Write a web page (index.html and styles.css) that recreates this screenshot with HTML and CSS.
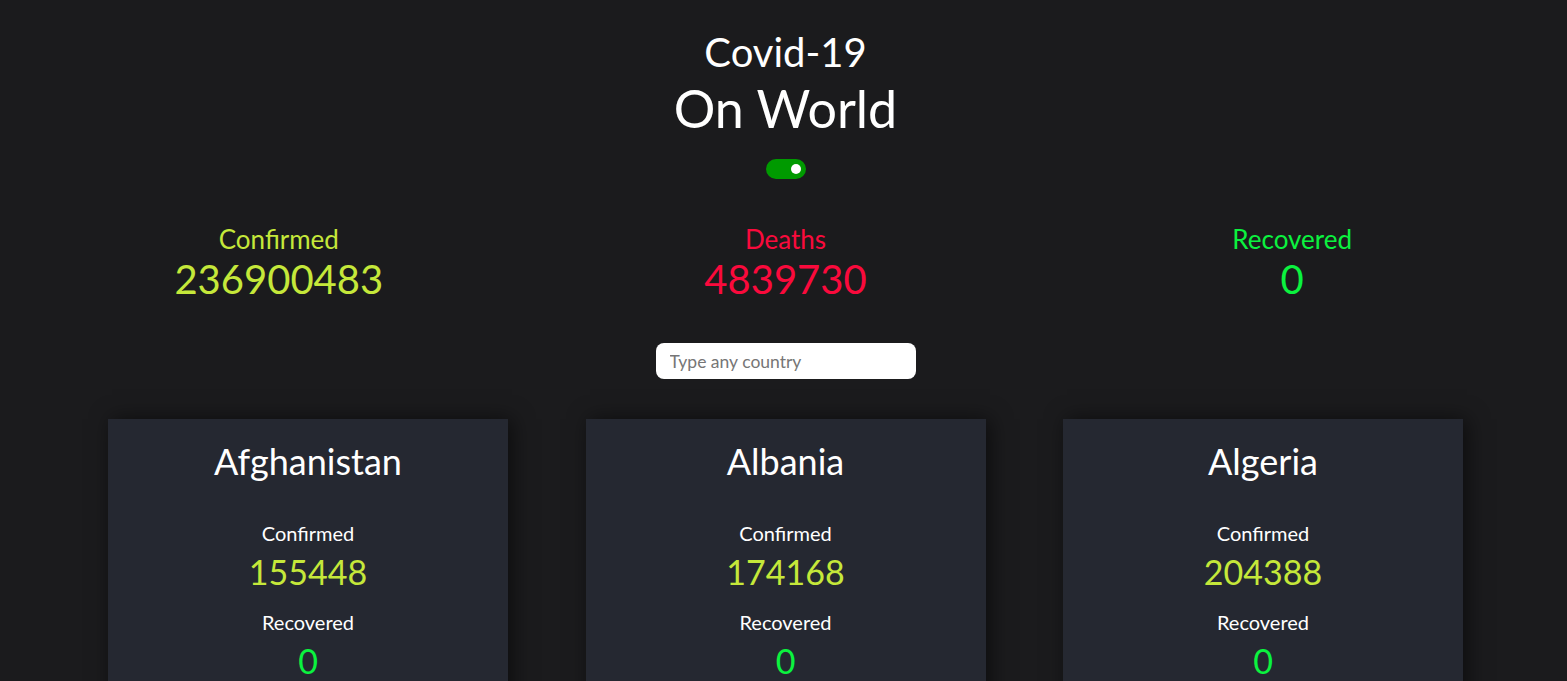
FILE: index.html
```html
<!DOCTYPE html>
<html lang="en">
<head>
<meta charset="utf-8">
<title>Covid-19 On World</title>
<link rel="stylesheet" href="styles.css">
</head>
<body>
<header class="hero">
  <h2 class="sub">Covid-19</h2>
  <h1 class="title">On World</h1>
  <label class="switch"><span class="knob"></span></label>
</header>
<section class="stats">
  <div class="stat confirmed"><div class="label">Confirmed</div><div class="num">236900483</div></div>
  <div class="stat deaths"><div class="label">Deaths</div><div class="num">4839730</div></div>
  <div class="stat recovered"><div class="label">Recovered</div><div class="num">0</div></div>
</section>
<div class="search"><input type="text" placeholder="Type any country"></div>
<section class="cards">
  <div class="card">
    <h3 class="country">Afghanistan</h3>
    <div class="clabel">Confirmed</div><div class="cnum yellow">155448</div>
    <div class="clabel">Recovered</div><div class="cnum green">0</div>
  </div>
  <div class="card">
    <h3 class="country">Albania</h3>
    <div class="clabel">Confirmed</div><div class="cnum yellow">174168</div>
    <div class="clabel">Recovered</div><div class="cnum green">0</div>
  </div>
  <div class="card">
    <h3 class="country">Algeria</h3>
    <div class="clabel">Confirmed</div><div class="cnum yellow">204388</div>
    <div class="clabel">Recovered</div><div class="cnum green">0</div>
  </div>
</section>
</body>
</html>
```
FILE: styles.css
```css
html, body {
  margin: 0;
  padding: 0;
  background: #1b1b1d;
  color: #ffffff;
  font-family: Lato, "Noto Sans", sans-serif;
}
body {
  overflow: hidden;
  padding-left: 4px;
}
.hero {
  display: flex;
  flex-direction: column;
  align-items: center;
  padding-top: 28px;
}
.sub {
  margin: 0;
  font-size: 40px;
  font-weight: 400;
  line-height: 48px;
}
.title {
  margin: 0;
  font-size: 52px;
  font-weight: 400;
  line-height: 64px;
}
.switch {
  margin-top: 19px;
  width: 40px;
  height: 20px;
  border-radius: 10px;
  background: #009a00;
  display: flex;
  align-items: center;
  justify-content: flex-end;
  padding-right: 5px;
  box-sizing: border-box;
}
.knob {
  width: 10px;
  height: 10px;
  border-radius: 50%;
  background: #fff;
}
.stats {
  display: grid;
  grid-template-columns: repeat(3, 1fr);
  width: 1520px;
  margin: 44px auto 0;
  text-align: center;
}
.label {
  font-size: 26px;
  line-height: 32px;
}
.num {
  font-size: 40px;
  line-height: 48px;
}
.confirmed { color: #c5e83a; }
.deaths { color: #fa0a3c; }
.recovered { color: #0bf23f; }
.search {
  display: flex;
  justify-content: center;
  margin-top: 40px;
}
.search input {
  width: 260px;
  height: 36px;
  box-sizing: border-box;
  border: none;
  border-radius: 8px;
  padding: 0 14px;
  font-family: Lato, sans-serif;
  font-size: 17.5px;
  color: #333;
  background: #fff;
  outline: none;
}
.search input::placeholder {
  color: #767676;
}
.cards {
  display: flex;
  justify-content: center;
  gap: 77.5px;
  margin-top: 40px;
}
.card {
  width: 400px;
  height: 300px;
  background: #252831;
  box-shadow: 4px 0 20px rgba(0, 0, 0, 0.55);
  display: flex;
  flex-direction: column;
  align-items: center;
  padding-top: 20px;
  box-sizing: border-box;
}
.country {
  margin: 0 0 38px;
  font-size: 36px;
  font-weight: 400;
  line-height: 44px;
}
.clabel {
  font-size: 20px;
  line-height: 24px;
}
.cnum {
  font-size: 34px;
  line-height: 40px;
  margin-top: 7px;
  margin-bottom: 18px;
}
.yellow { color: #c5e83a; }
.green { color: #0bf23f; }
```
